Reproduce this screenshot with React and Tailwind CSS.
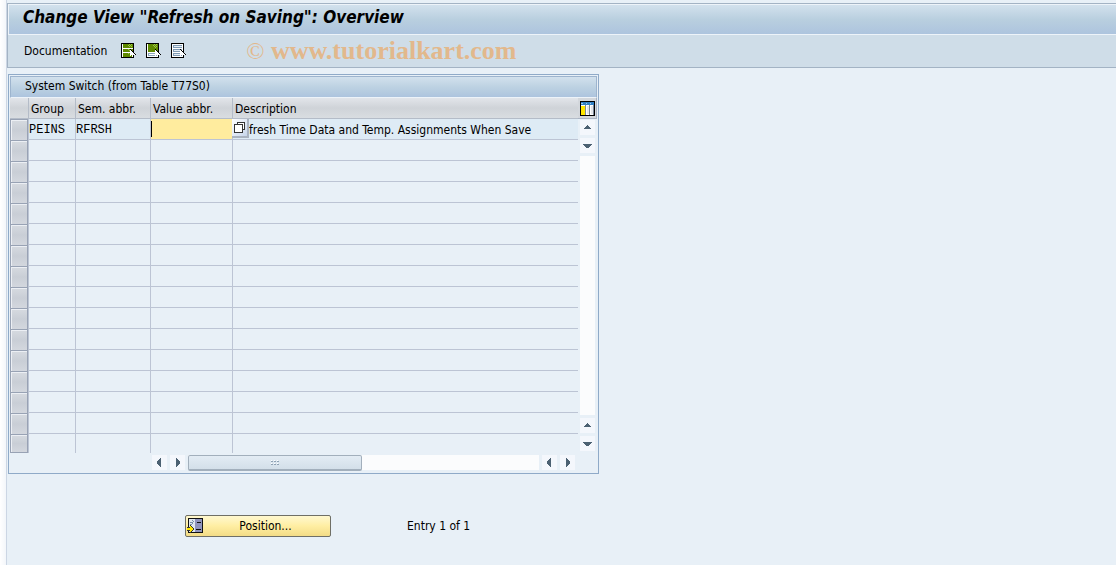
import React, { useState } from "react";

const EMPTY_ROWS = 15;

const CursorShape = () => (
  <g shapeRendering="crispEdges">
    <path d="M9 6h1v1h1v1h1v1h1v1h1v1h1v1h-2v2h-1v-1h-1v-1h-1v1H9z" fill="#000" />
    <path d="M9 7h1v1h1v1h1v1h1v1h1v1h-2v2h-1v-2h-1v1H9z" fill="#fff" />
  </g>
);

const SelectAllIcon = () => (
  <svg width="16" height="16" viewBox="0 0 16 16">
    <g shapeRendering="crispEdges">
      <rect x="0.5" y="0.5" width="12" height="14" fill="#fff" stroke="#000" />
      <path d="M2 1h10v4H2zM2 6h10v3H2zM2 10h10v4H2z" fill="#5f8a00" />
      <path d="M7 2h1v1H7zM9 2h1v1H9zM8 3h1v1H8zM10 3h1v1h-1zM8 1h1v1H8zM10 1h1v1h-1zM7 6h1v1H7zM9 6h1v1H9zM8 7h1v1H8zM7 10h1v1H7z" fill="#9fc64a" />
    </g>
    <CursorShape />
  </svg>
);

const SelectBlockIcon = () => (
  <svg width="16" height="16" viewBox="0 0 16 16">
    <g shapeRendering="crispEdges">
      <rect x="0.5" y="0.5" width="12" height="14" fill="#fff" stroke="#000" />
      <path d="M2 1h10v8H2z" fill="#5f8a00" />
      <path d="M7 2h1v1H7zM9 2h1v1H9zM8 3h1v1H8zM10 3h1v1h-1zM8 1h1v1H8zM10 1h1v1h-1zM9 4h1v1H9z" fill="#9fc64a" />
      <path d="M2 10h9v3H2z" fill="#8ba6bd" />
      <path d="M3 11h7v1H3z" fill="#fff" />
    </g>
    <CursorShape />
  </svg>
);

const DeselectAllIcon = () => (
  <svg width="16" height="16" viewBox="0 0 16 16">
    <g shapeRendering="crispEdges">
      <rect x="0.5" y="0.5" width="12" height="14" fill="#fff" stroke="#000" />
      <path d="M2 2h9v3H2zM2 6h9v3H2zM2 10h9v3H2z" fill="#7f9bb5" />
      <path d="M3 3h8v1H3zM3 7h8v1H3zM3 11h8v1H3z" fill="#e6eef5" />
    </g>
    <CursorShape />
  </svg>
);

const ColumnsIcon = () => (
  <svg width="15" height="15" viewBox="0 0 15 15" shapeRendering="crispEdges">
    <rect width="15" height="15" fill="#000" />
    <rect x="1" y="1" width="13" height="13" fill="#fff" />
    <rect x="1" y="1" width="13" height="3" fill="#2f7fc4" />
    <path d="M1 2h2v1H1zM6 2h1v1H6zM10 2h1v1h-1z" fill="#9cc9ee" />
    <rect x="1" y="5" width="4" height="9" fill="#ffe600" />
    <path d="M5 4h1v10H5zM9 4h1v10H9zM13 4h1v10h-1z" fill="#7a8797" />
    <path d="M7 5h2v8H7zM11 5h2v8h-2z" fill="#e4e6ea" />
  </svg>
);

const MatchIcon = () => (
  <svg width="12" height="12" viewBox="0 0 12 12" shapeRendering="crispEdges">
    <rect x="3.5" y="0.5" width="7" height="7" fill="#fff" stroke="#333" />
    <rect x="0.5" y="2.5" width="8" height="8" fill="#fff" stroke="#333" />
  </svg>
);

const PositionIcon = () => (
  <svg width="16" height="16" viewBox="0 0 16 16" shapeRendering="crispEdges">
    <rect x="1" width="15" height="15" fill="#111" />
    <rect x="2" y="1" width="6" height="13" fill="#dfe7f0" />
    <rect x="8" y="1" width="7" height="13" fill="#9094bd" />
    <path d="M10 4h4v1h-4zM9 11h5v1H9z" fill="#111" />
    <path d="M3 4h3v1H3zM5 2h1v1H5zM6 3h1v1H6zM5 5h1v1H5zM3 6h2v1H3z" fill="#7790a8" />
    <path d="M0 9h3V7h1v1h1v1h1v1h1v2H6v1H5v1H4v1H3v-2H0z" fill="#333" />
    <path d="M0 10h3V8h1v1h1v1h1v2H5v1H4v1H3v-2H0z" fill="#ffe600" />
  </svg>
);

const Arrow = ({ dir }) => {
  const paths = {
    up: "M4 2h1v1h1v1h1v1h1v1H1V5h1V4h1V3h1z",
    down: "M0 3h9v1H8v1H7v1H6v1H3V6H2V5H1V4H0z",
    left: "M6 0v9H5V8H4V7H3V6H2V3h1V2h1V1h1V0z",
    right: "M3 0v9h1V8h1V7h1V6h1V3H6V2H5V1H4V0z",
  };
  return (
    <svg width="9" height="9" viewBox="0 0 9 9" shapeRendering="crispEdges">
      <path d={paths[dir]} fill="#4c6172" />
    </svg>
  );
};

const ScrollButton = ({ dir, label }) => (
  <button
    aria-label={label}
    className="flex h-[15px] w-[15px] shrink-0 items-center justify-center bg-[#f4f7fc]"
  >
    <Arrow dir={dir} />
  </button>
);

const HeaderCell = ({ children }) => (
  <th
    scope="col"
    className="h-[21px] border-r border-b border-[#b4bcc8] bg-linear-to-b from-[#e2e5ea] via-[#cfd3d8] to-[#d9dde1] px-0.5 pt-0.5 pb-0 text-left font-normal whitespace-nowrap last:border-r-0"
  >
    {children}
  </th>
);

const RowSelector = ({ label, last }) => (
  <td className="border-r border-[#bcc4d4] p-0">
    <button
      aria-label={label}
      className={`block w-full border-x border-t border-[#98a2b4] bg-linear-to-b from-[#d6dae0] via-[#c9ced6] to-[#d3d7de] shadow-[inset_1px_1px_0_#eceff4] ${
        last ? "h-[19px] border-b" : "h-[21px]"
      }`}
    />
  </td>
);

const SystemTable = () => {
  const [value, setValue] = useState("");

  return (
    <table className="w-full table-fixed border-separate border-spacing-0">
      <colgroup>
        <col className="w-[19px]" />
        <col className="w-[47px]" />
        <col className="w-[75px]" />
        <col className="w-[82px]" />
        <col />
      </colgroup>
      <thead>
        <tr>
          <HeaderCell />
          <HeaderCell>Group</HeaderCell>
          <HeaderCell>Sem. abbr.</HeaderCell>
          <HeaderCell>Value abbr.</HeaderCell>
          <HeaderCell>Description</HeaderCell>
        </tr>
      </thead>
      <tbody>
        <tr className="h-[21px] bg-[#deebf5]">
          <RowSelector label="Select row 1" />
          <td className="border-r border-b border-[#bcc4d4] px-0 pt-0.5 pb-0 font-['Liberation_Mono',monospace]">PEINS</td>
          <td className="border-r border-b border-[#bcc4d4] px-0 pt-0.5 pb-0 font-['Liberation_Mono',monospace]">RFRSH</td>
          <td className="relative border-r border-b border-[#bcc4d4] p-0">
            <input
              aria-label="Value abbr."
              value={value}
              onChange={(e) => setValue(e.target.value)}
              className="block h-5 w-full bg-[#ffec9e] outline-none"
            />
            <span className="absolute top-0.5 left-0 h-4 w-px bg-black" />
            <button
              aria-label="Possible entries"
              className="absolute top-0 left-full z-10 flex h-[19px] w-[17px] items-center justify-center border-r-2 border-b-2 border-[#aab3c0] bg-linear-to-br from-white to-[#c7d5ea]"
            >
              <MatchIcon />
            </button>
          </td>
          <td className="border-b border-[#bcc4d4] pt-0.5 pr-0 pb-0 pl-4 whitespace-nowrap">
            fresh Time Data and Temp. Assignments When Save
          </td>
        </tr>
        {Array.from({ length: EMPTY_ROWS }, (_, i) => {
          const last = i === EMPTY_ROWS - 1;
          const cell = last ? "border-r border-[#bcc4d4] p-0" : "border-r border-b border-[#bcc4d4] p-0";
          return (
            <tr key={i} className={last ? "h-[19px]" : "h-[21px]"}>
              <RowSelector label={`Select row ${i + 2}`} last={last} />
              <td className={cell} />
              <td className={cell} />
              <td className={cell} />
              <td className={last ? "p-0" : "border-b border-[#bcc4d4] p-0"} />
            </tr>
          );
        })}
      </tbody>
    </table>
  );
};

const App = () => {
  return (
    <div className="flex min-h-screen bg-white font-['DejaVu_Sans_Condensed','DejaVu_Sans',sans-serif] text-xs text-black">
      <div className="w-1.5 shrink-0 bg-linear-to-r from-white to-[#f3f6fa]" />
      <div className="min-w-0 flex-1 border-l border-[#ccd6e4] bg-[#e8f0f7] pt-[3px]">
        <header className="border-y border-l border-[#a3b3c4]">
          <div className="flex h-[31px] items-center border-y border-l border-[#edf3f9] bg-linear-to-b from-[#d2e1ed] via-[#b9cfdf] to-[#adc4de] pb-1.5 pl-3.5">
            <h1 className="text-[17px] leading-6 font-bold italic">Change View "Refresh on Saving": Overview</h1>
          </div>
          <div className="flex h-8 items-center bg-[#cfdde8] pl-4">
            <button>Documentation</button>
            <div className="ml-3.5 flex gap-[9px]">
              <button aria-label="Select all"><SelectAllIcon /></button>
              <button aria-label="Select block"><SelectBlockIcon /></button>
              <button aria-label="Deselect all"><DeselectAllIcon /></button>
            </div>
            <p className="ml-[59px] font-['Liberation_Serif',serif] text-[26px] leading-8 whitespace-nowrap text-[#e2b88c]">
              <span className="text-2xl">©</span> <b>www.tutorialkart.com</b>
            </p>
          </div>
        </header>

        <main className="px-px pt-1.5">
          <section className="w-[591px] max-w-full border border-[#8faac8] p-px">
            <h2 className="flex h-[22px] items-center border border-b-[#edf3f9] border-[#9db4ce] bg-linear-to-b from-[#d2e1ed] via-[#bdd2e2] to-[#adc4de] pb-0.5 pl-3.5">
              System Switch (from Table T77S0)
            </h2>
            <div className="flex">
              <div className="min-w-0 flex-1">
                <SystemTable />
              </div>
              <div className="flex w-[19px] shrink-0 flex-col">
                <div className="flex h-[21px] items-center justify-center border-r border-b border-[#a9b4c4] bg-[#d3d7dc]">
                  <button aria-label="Configuration"><ColumnsIcon /></button>
                </div>
                <div className="flex flex-1 flex-col items-center gap-[3px] pt-px pb-0.5">
                  <ScrollButton dir="up" label="Scroll up" />
                  <ScrollButton dir="down" label="Scroll down" />
                  <div className="w-[15px] flex-1 bg-[#fbfcfd]" />
                  <ScrollButton dir="up" label="Previous page" />
                  <ScrollButton dir="down" label="Next page" />
                </div>
              </div>
            </div>
            <div className="flex gap-[3px] pt-0.5 pr-[22px] pb-0.5 pl-[142px]">
              <ScrollButton dir="left" label="Scroll left" />
              <ScrollButton dir="right" label="Scroll right" />
              <div className="flex h-[15px] flex-1 bg-[#fbfcfd]">
                <div className="flex h-4 w-[174px] items-center justify-center rounded-xs border border-b-2 border-[#a2afbc] bg-linear-to-b from-[#e3ecf4] to-[#d3dfe9]">
                  <svg width="8" height="6" viewBox="0 0 8 6" shapeRendering="crispEdges">
                    <path d="M0 1h2v1H0zM3 1h2v1H3zM6 1h2v1H6zM0 4h2v1H0zM3 4h2v1H3zM6 4h2v1H6z" fill="#8fa2b4" />
                    <path d="M0 0h1v1H0zM3 0h1v1H3zM6 0h1v1H6zM0 3h1v1H0zM3 3h1v1H3zM6 3h1v1H6z" fill="#fff" />
                  </svg>
                </div>
              </div>
              <ScrollButton dir="left" label="Previous columns" />
              <ScrollButton dir="right" label="Next columns" />
            </div>
          </section>

          <footer className="flex items-center pt-[41px] pl-[177px]">
            <button className="flex h-[22px] w-[146px] items-center rounded-xs border border-[#6f6f66] bg-linear-to-b from-[#fff8cf] via-[#ffeea2] to-[#f3dc86] pl-px">
              <PositionIcon />
              <span className="flex-1 pr-0.5">Position...</span>
            </button>
            <span className="ml-[76px]">Entry 1 of 1</span>
          </footer>
        </main>
      </div>
    </div>
  );
};

export default App;
